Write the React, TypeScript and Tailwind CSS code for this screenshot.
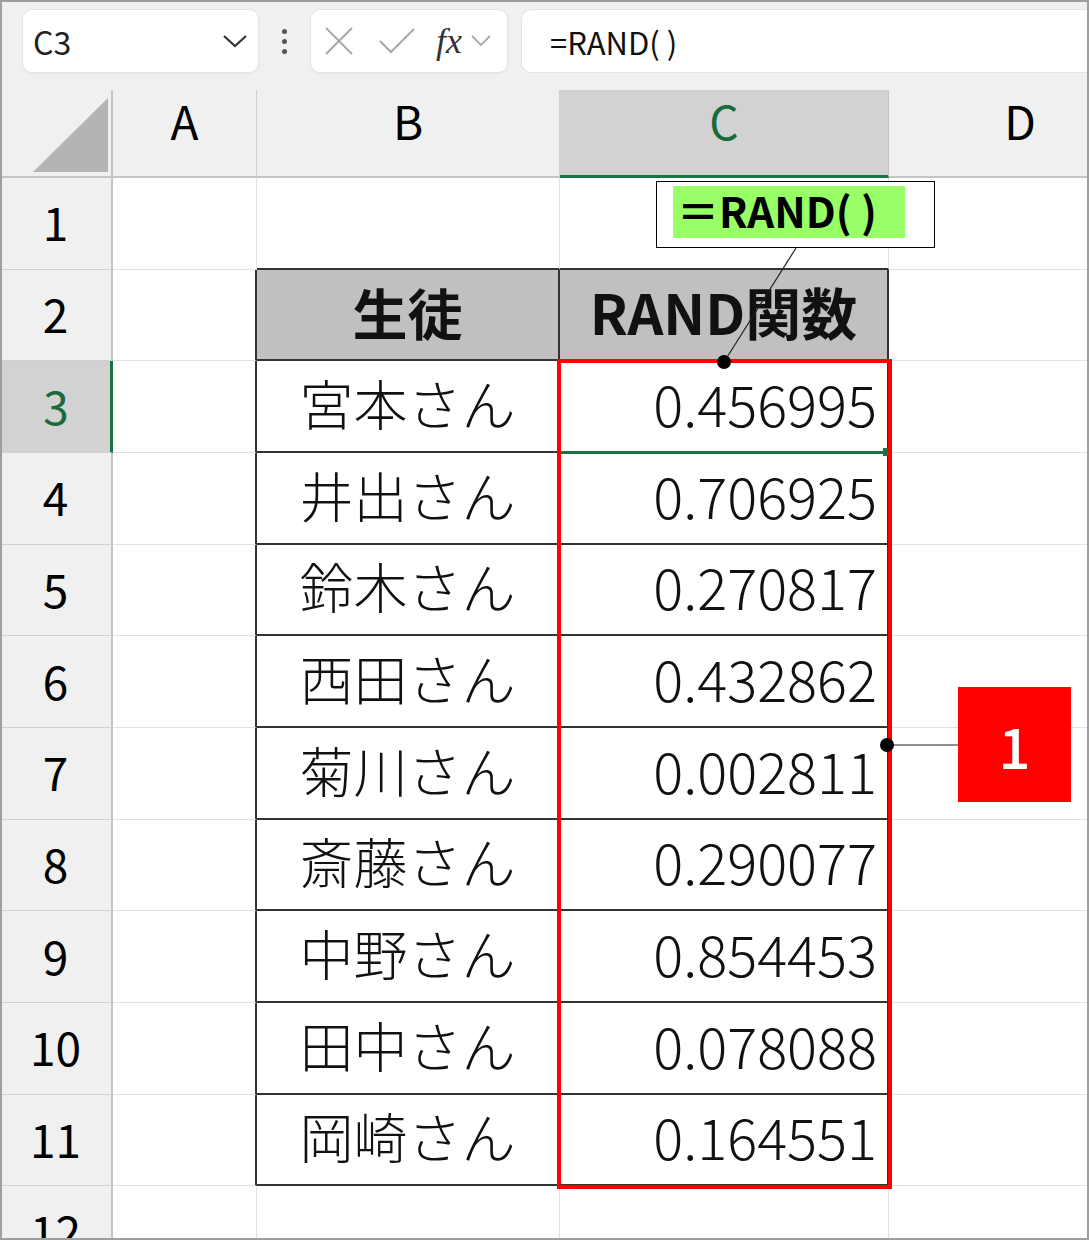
import React from 'react'

const JP = "font-['Noto_Sans_CJK_JP','Noto_Sans',sans-serif]"

type Row = { n: number; name?: string; value?: string; head?: boolean }

const rows: Row[] = [
  { n: 1 },
  { n: 2, name: '生徒', value: 'RAND関数', head: true },
  { n: 3, name: '宮本さん', value: '0.456995' },
  { n: 4, name: '井出さん', value: '0.706925' },
  { n: 5, name: '鈴木さん', value: '0.270817' },
  { n: 6, name: '西田さん', value: '0.432862' },
  { n: 7, name: '菊川さん', value: '0.002811' },
  { n: 8, name: '斎藤さん', value: '0.290077' },
  { n: 9, name: '中野さん', value: '0.854453' },
  { n: 10, name: '田中さん', value: '0.078088' },
  { n: 11, name: '岡崎さん', value: '0.164551' },
  { n: 12 },
]

function Toolbar() {
  return (
    <div className="flex h-[90px] items-start bg-[#eef0f2] pl-[22px] pt-[9px]">
      <div className="flex h-[64px] w-[237px] items-center justify-between rounded-[10px] border border-[#e2e4e6] bg-white pl-[10px] pr-[10px] shadow-[0_1px_2px_rgba(0,0,0,0.05)]">
        <span className="text-[32px] leading-none text-[#222]">C3</span>
        <svg width="26" height="16" viewBox="0 0 26 16">
          <polyline points="2,3 13,13 24,3" fill="none" stroke="#333" strokeWidth="2.2" />
        </svg>
      </div>
      <div className="flex h-[64px] w-[51px] flex-col items-center justify-center gap-[5px]">
        <span className="h-[5px] w-[5px] rounded-full bg-[#555]" />
        <span className="h-[5px] w-[5px] rounded-full bg-[#555]" />
        <span className="h-[5px] w-[5px] rounded-full bg-[#555]" />
      </div>
      <div className="flex h-[64px] w-[198px] items-center rounded-[10px] border border-[#e2e4e6] bg-white pl-[13px] shadow-[0_1px_2px_rgba(0,0,0,0.05)]">
        <svg width="30" height="30" viewBox="0 0 30 30">
          <line x1="2" y1="2" x2="28" y2="28" stroke="#a8a8a8" strokeWidth="2" />
          <line x1="28" y1="2" x2="2" y2="28" stroke="#a8a8a8" strokeWidth="2" />
        </svg>
        <svg width="38" height="28" viewBox="0 0 38 28" className="ml-[24px]">
          <polyline points="2,14 13,25 36,2" fill="none" stroke="#a8a8a8" strokeWidth="2" />
        </svg>
        <span className="ml-[20px] font-['Liberation_Serif',serif] text-[36px] italic leading-none text-[#333]">fx</span>
        <svg width="22" height="14" viewBox="0 0 22 14" className="ml-[8px]">
          <polyline points="2,2 11,11 20,2" fill="none" stroke="#aaa" strokeWidth="1.8" />
        </svg>
      </div>
      <div className="ml-[13px] flex h-[64px] flex-1 items-center rounded-l-[10px] border border-r-0 border-[#e2e4e6] bg-white pl-[28px]">
        <span className="text-[31px] leading-none text-[#111]">=RAND( )</span>
      </div>
    </div>
  )
}

function ColumnHeader() {
  return (
    <div className="flex h-[88px] bg-[#f0f0f0] text-[46px] leading-none text-black">
      <div className="relative w-[113px] shrink-0 border-r-2 border-b-2 border-[#c4c4c4]">
        <svg width="113" height="88" viewBox="0 0 113 88" className="absolute left-0 top-0">
          <polygon points="33,82 108,82 108,8" fill="#b4b4b4" />
        </svg>
      </div>
      <div className="flex w-[144px] shrink-0 items-center justify-center border-r border-b-2 border-r-[#cfcfcf] border-b-[#c4c4c4] pb-[26px]">A</div>
      <div className="flex w-[303px] shrink-0 items-center justify-center border-r border-b-2 border-r-[#cfcfcf] border-b-[#c4c4c4] pb-[26px]">B</div>
      <div className="flex w-[329px] shrink-0 items-center justify-center border-r border-b-[3px] border-r-[#c4c4c4] border-b-[#1a7343] bg-[#d2d2d2] pb-[25px] text-[#1a6b3c]">C</div>
      <div className="flex w-[262px] shrink-0 items-center justify-center border-b-2 border-[#c4c4c4] pb-[26px]">D</div>
    </div>
  )
}

function SheetRow({ row }: { row: Row }) {
  const inTable = row.n >= 2 && row.n <= 11
  const tableBottom = row.n >= 1 && row.n <= 11
  const selected = row.n === 3

  return (
    <div className="flex h-[91.67px]">
      <div
        className={
          selected
            ? 'flex w-[113px] shrink-0 items-center justify-center border-b border-r-[3px] border-b-[#d0d0d0] border-r-[#1a7343] bg-[#d2d2d2] pb-[4px] pl-[2px] text-[46px] text-[#1a6b3c]'
            : 'flex w-[113px] shrink-0 items-center justify-center border-b border-r-2 border-b-[#d0d0d0] border-r-[#c4c4c4] bg-[#f0f0f0] pb-[4px] text-[46px] text-black'
        }
      >
        {row.n}
      </div>
      <div
        className={
          inTable
            ? 'w-[144px] shrink-0 border-b border-r-2 border-b-[#e1e1e1] border-r-[#333]'
            : 'w-[144px] shrink-0 border-b border-r border-[#e1e1e1]'
        }
      />
      <div
        className={[
          'flex w-[303px] shrink-0 items-center justify-center pb-[6px]',
          inTable ? 'border-r-2 border-r-[#333]' : 'border-r border-r-[#e1e1e1]',
          tableBottom ? 'border-b-2 border-b-[#333]' : 'border-b border-b-[#e1e1e1]',
          row.head ? 'bg-[#c0c0c0] text-[55px] font-bold' : 'text-[54px] font-light',
        ].join(' ')}
      >
        {row.name}
      </div>
      <div
        className={[
          'flex w-[329px] shrink-0 items-center pb-[6px]',
          inTable ? 'border-r-2 border-r-[#333]' : 'border-r border-r-[#e1e1e1]',
          tableBottom ? 'border-b-2 border-b-[#333]' : 'border-b border-b-[#e1e1e1]',
          row.head ? 'justify-center bg-[#c0c0c0] text-[56px] font-bold' : 'justify-end pr-[10px] text-[56px] font-light',
        ].join(' ')}
      >
        {row.value}
      </div>
      <div className="w-[262px] shrink-0 border-b border-[#e1e1e1]" />
    </div>
  )
}

export default function App() {
  return (
    <div className={`relative h-[1240px] w-[1089px] overflow-hidden bg-white text-[#111] ${JP}`}>
      <Toolbar />
      <ColumnHeader />
      <div className="leading-none">
        {rows.map((row) => (
          <SheetRow key={row.n} row={row} />
        ))}
      </div>

      {/* active cell C3 */}
      <div className="absolute left-[560px] top-[361px] h-[93px] w-[328px] border-b-[3px] border-[#1a7343]" />
      <div className="absolute left-[883px] top-[448px] h-[8px] w-[8px] bg-[#1a7343]" />

      {/* red highlight over C3:C11 */}
      <div className="absolute left-[557px] top-[359px] h-[830px] w-[335px] border-[4px] border-[#ff0000]" />

      {/* callout with formula */}
      <div className="absolute left-[656px] top-[181px] h-[67px] w-[279px] border-[1.5px] border-black bg-white pl-[16px] pt-[4px]">
        <div className="flex h-[52px] w-[232px] items-center bg-[#99ff66] pb-[4px] pl-[4px] text-[42px] font-bold leading-none text-black">
          ＝RAND( )
        </div>
      </div>

      {/* badge */}
      <div className="absolute left-[958px] top-[687px] flex h-[115px] w-[113px] items-center justify-center bg-[#ff0000] text-[56px] font-medium leading-none text-white">
        1
      </div>

      <svg className="pointer-events-none absolute left-0 top-0" width="1089" height="1240" viewBox="0 0 1089 1240">
        <line x1="796" y1="248" x2="724" y2="362" stroke="#222" strokeWidth="1.2" />
        <circle cx="724" cy="362" r="7" fill="#000" />
        <line x1="887" y1="745" x2="958" y2="745" stroke="#222" strokeWidth="1.2" />
        <circle cx="887" cy="745" r="7" fill="#000" />
      </svg>

      <div className="pointer-events-none absolute inset-0 border-2 border-[#9e9e9e]" />
    </div>
  )
}
